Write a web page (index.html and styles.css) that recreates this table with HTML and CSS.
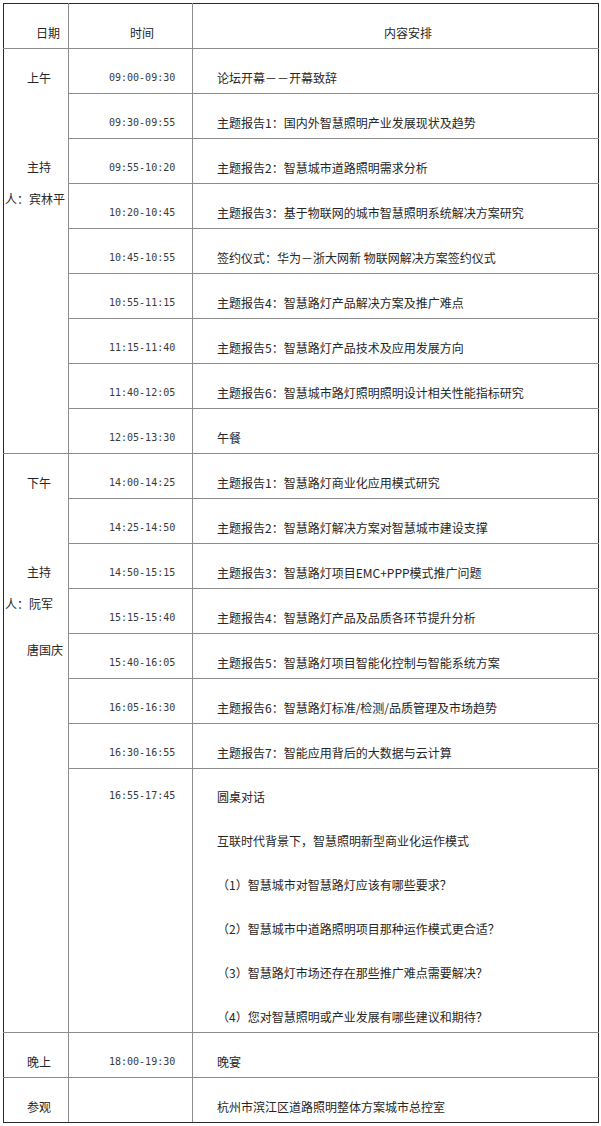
FILE: index.html
```html
<!DOCTYPE html>
<html lang="zh">
<head>
<meta charset="utf-8">
<title>日程安排</title>
<link rel="stylesheet" href="styles.css">
</head>
<body>
<table class="agenda">
  <colgroup>
    <col class="w-date">
    <col class="w-time">
    <col class="w-content">
  </colgroup>
  <thead>
    <tr class="row">
      <th class="c-date"><span class="hd-date">日期</span></th>
      <th class="c-time"><span class="hd-time">时间</span></th>
      <th class="c-content"><span class="hd-content">内容安排</span></th>
    </tr>
  </thead>
  <tbody>
    <tr class="row">
      <td class="c-date" rowspan="9">
        <div class="ln">上午</div>
        <div class="ln host-top">主持</div>
        <div class="ln wrap">人：宾林平</div>
      </td>
      <td class="c-time">09:00-09:30</td>
      <td class="c-content">论坛开幕－－开幕致辞</td>
    </tr>
    <tr class="row"><td class="c-time">09:30-09:55</td><td class="c-content">主题报告1：国内外智慧照明产业发展现状及趋势</td></tr>
    <tr class="row"><td class="c-time">09:55-10:20</td><td class="c-content">主题报告2：智慧城市道路照明需求分析</td></tr>
    <tr class="row"><td class="c-time">10:20-10:45</td><td class="c-content">主题报告3：基于物联网的城市智慧照明系统解决方案研究</td></tr>
    <tr class="row"><td class="c-time">10:45-10:55</td><td class="c-content">签约仪式：华为－浙大网新 物联网解决方案签约仪式</td></tr>
    <tr class="row"><td class="c-time">10:55-11:15</td><td class="c-content">主题报告4：智慧路灯产品解决方案及推广难点</td></tr>
    <tr class="row"><td class="c-time">11:15-11:40</td><td class="c-content">主题报告5：智慧路灯产品技术及应用发展方向</td></tr>
    <tr class="row"><td class="c-time">11:40-12:05</td><td class="c-content">主题报告6：智慧城市路灯照明照明设计相关性能指标研究</td></tr>
    <tr class="row"><td class="c-time">12:05-13:30</td><td class="c-content">午餐</td></tr>

    <tr class="row">
      <td class="c-date" rowspan="8">
        <div class="ln">下午</div>
        <div class="ln host-top">主持</div>
        <div class="ln wrap">人：阮军</div>
        <div class="ln host-next">唐国庆</div>
      </td>
      <td class="c-time">14:00-14:25</td>
      <td class="c-content">主题报告1：智慧路灯商业化应用模式研究</td>
    </tr>
    <tr class="row"><td class="c-time">14:25-14:50</td><td class="c-content">主题报告2：智慧路灯解决方案对智慧城市建设支撑</td></tr>
    <tr class="row"><td class="c-time">14:50-15:15</td><td class="c-content">主题报告3：智慧路灯项目EMC+PPP模式推广问题</td></tr>
    <tr class="row"><td class="c-time">15:15-15:40</td><td class="c-content">主题报告4：智慧路灯产品及品质各环节提升分析</td></tr>
    <tr class="row"><td class="c-time">15:40-16:05</td><td class="c-content">主题报告5：智慧路灯项目智能化控制与智能系统方案</td></tr>
    <tr class="row"><td class="c-time">16:05-16:30</td><td class="c-content">主题报告6：智慧路灯标准/检测/品质管理及市场趋势</td></tr>
    <tr class="row"><td class="c-time">16:30-16:55</td><td class="c-content">主题报告7：智能应用背后的大数据与云计算</td></tr>
    <tr class="row-big">
      <td class="c-time big">16:55-17:45</td>
      <td class="c-content big">
        <p class="item">圆桌对话</p>
        <p class="item">互联时代背景下，智慧照明新型商业化运作模式</p>
        <p class="item">（1）智慧城市对智慧路灯应该有哪些要求？</p>
        <p class="item">（2）智慧城市中道路照明项目那种运作模式更合适？</p>
        <p class="item">（3）智慧路灯市场还存在那些推广难点需要解决？</p>
        <p class="item">（4）您对智慧照明或产业发展有哪些建议和期待？</p>
      </td>
    </tr>

    <tr class="row">
      <td class="c-date"><div class="ln">晚上</div></td>
      <td class="c-time">18:00-19:30</td>
      <td class="c-content">晚宴</td>
    </tr>
    <tr class="row">
      <td class="c-date"><div class="ln">参观</div></td>
      <td class="c-time"></td>
      <td class="c-content">杭州市滨江区道路照明整体方案城市总控室</td>
    </tr>
  </tbody>
</table>
</body>
</html>
```

FILE: styles.css
```css
html, body {
  margin: 0;
  padding: 0;
  background: #ffffff;
}

body {
  padding: 3px 0 0 3px;
  font-family: "Noto Sans CJK SC", "Noto Sans", sans-serif;
  font-size: 12px;
  color: #262626;
}

.agenda {
  border-collapse: collapse;
  table-layout: fixed;
  width: 595px;
  border: 1px solid #2a2a2a;
}

.w-date { width: 65px; }
.w-time { width: 124px; }
.w-content { width: 406px; }

.agenda th,
.agenda td {
  border: 1px solid #8c8c8c;
  padding: 0;
  vertical-align: top;
  text-align: left;
  font-weight: 400;
  line-height: 16px;
  white-space: nowrap;
}

.agenda tr > :first-child { border-left-color: #2a2a2a; }
.agenda tr > :last-child { border-right-color: #2a2a2a; }
.agenda thead th { border-top-color: #2a2a2a; }
.agenda tbody tr:last-child td { border-bottom-color: #2a2a2a; }

.agenda .row { height: 45px; }
.agenda .row-big { height: 264px; }

.agenda .row > th,
.agenda .row > td {
  padding-top: 21px;
}

.agenda .c-date {
  padding-left: 23px;
}

.agenda .c-time {
  padding-left: 40px;
  font-family: "DejaVu Sans Mono", "Liberation Mono", monospace;
  font-size: 10px;
  color: #3a3a3a;
}

.agenda .c-content {
  padding-left: 24px;
}

.hd-date { margin-left: 9px; }
.hd-time {
  margin-left: 21px;
  font-family: "Noto Sans CJK SC", sans-serif;
  font-size: 12px;
  color: #262626;
}
.hd-content { margin-left: 167px; }

.ln { line-height: 16px; }
.host-top { margin-top: 73px; }
.wrap { margin-top: 16px; margin-left: -22px; }
.host-next { margin-top: 30px; }

.agenda .row-big > td { padding-top: 20px; }
.agenda .row-big > .c-time { padding-top: 19px; }

.item {
  margin: 0 0 28px 0;
  line-height: 16px;
}
.item:last-child { margin-bottom: 0; }
```
